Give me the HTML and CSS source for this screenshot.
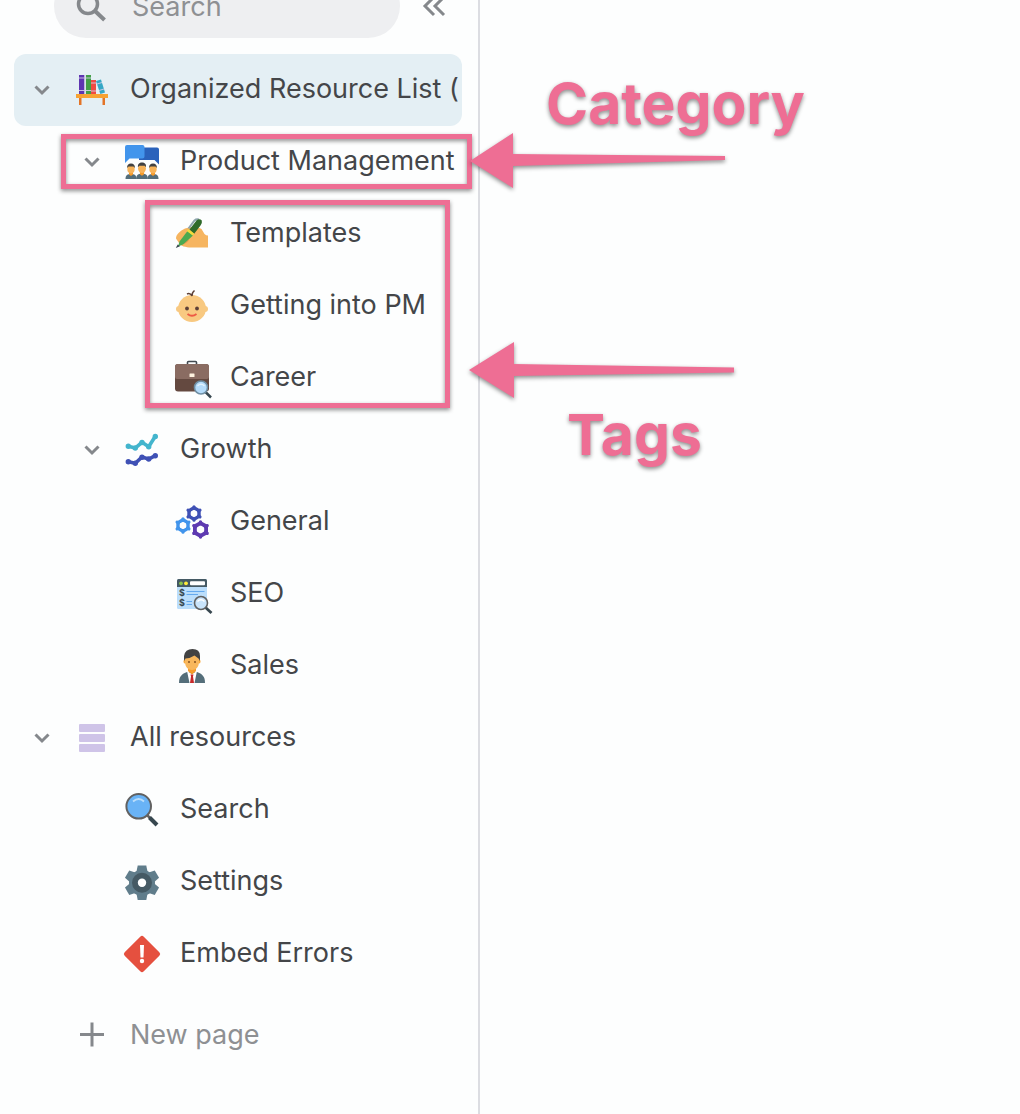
FILE: index.html
```
<!DOCTYPE html>
<html lang="en">
<head>
    <meta charset="utf-8">
    <title>Organized Resource List</title>
    <link rel="stylesheet" href="styles.css">
</head>
<body>
    <!-- shared shapes -->
    <svg class="defs" aria-hidden="true">
        <symbol id="chevron" viewBox="0 0 20 20">
            <path d="M3.500 6.500L10 13L16.500 6.500" fill="none" stroke="#85888c" stroke-width="3"/>
        </symbol>
        <symbol id="cog" viewBox="-10 -10 20 20">
            <path d="M0 -6.800L5.900 -3.400V3.400L0 6.800L-5.900 3.400V-3.400Z" fill="none" stroke="currentColor" stroke-width="4" stroke-linejoin="round"/>
            <path d="M0 -6V-8M0 6V8M5.200 -3L7 -4M-5.200 3L-7 4M5.200 3L7 4M-5.200 -3L-7 -4" stroke="currentColor" stroke-width="3.600" stroke-linecap="round"/>
        </symbol>
        <symbol id="person" viewBox="0 0 12 16">
            <path d="M0.500 16C0.500 12 2.500 11 6 11S11.500 12 11.500 16Z" fill="#546e7a"/>
            <path d="M4 9H8V11.500L6 13L4 11.500Z" fill="#f79c2a"/>
            <ellipse cx="6" cy="6" rx="3.700" ry="4.400" fill="#f7b359"/>
            <path d="M2.200 5C1.800 2 3.500 0.500 6 0.500S10.200 2 9.800 5L8.500 3.500H3.500Z" fill="#424242"/>
        </symbol>
    </svg>

    <aside class="sidebar">
        <div class="topbar">
            <label class="search">
                <svg class="icon" viewBox="0 0 36 36" aria-hidden="true">
                    <circle cx="14" cy="16" r="9.500" fill="none" stroke="#85888c" stroke-width="3.500"/>
                    <path d="M20.500 22.500L30.500 32" stroke="#85888c" stroke-width="4"/>
                </svg>
                <input type="text" placeholder="Search" aria-label="Search">
            </label>
            <button class="collapse" aria-label="Collapse sidebar">
                <svg width="24" height="24" viewBox="0 0 24 24">
                    <path d="M12 3L3 12L12 21M22 3L13 12L22 21" fill="none" stroke="#85888c" stroke-width="3"/>
                </svg>
            </button>
        </div>

        <nav>
            <ul class="tree">
                <li>
                    <div class="row active">
                        <button class="toggle" aria-label="Toggle Organized Resource List"><svg><use href="#chevron"/></svg></button>
                        <a href="#">
                            <svg class="icon" viewBox="0 0 36 36">
                                <path d="M5 3H10.500V22H5Z" fill="#5e35b1"/>
                                <path d="M12 3H17V22H12Z" fill="#43a047"/>
                                <path d="M17 8H22V22H17Z" fill="#ef4b43"/>
                                <path d="M22 9L27 7.500L31 20.500L26.300 22Z" fill="#35a8c6"/>
                                <path d="M5 6H10.500M5 18.500H10.500M12 6H17M12 18.500H17M17 11H22M17 19H22M23 12L28 10.500M25 18.500L30 17" stroke="#d5cdea" stroke-width="0.900"/>
                                <path d="M10.500 3H12V22H10.500Z" fill="#d9dfea"/>
                                <path d="M5 26H7.500V33H5ZM28.500 26H31V33H28.500Z" fill="#e37426"/>
                                <path d="M2 22H34V26H2Z" fill="#f7a233"/>
                            </svg>
                            <span class="label">Organized Resource List (</span>
                        </a>
                    </div>
                    <ul>
                        <li>
                            <div class="row">
                                <button class="toggle" aria-label="Toggle Product Management"><svg><use href="#chevron"/></svg></button>
                                <a href="#">
                                    <svg class="icon" viewBox="0 0 36 36">
                                        <path d="M15 3.500H33Q35 3.500 35 5.500V20.500L30.500 16H15Z" fill="#2a62bb"/>
                                        <path d="M3 1H18.500Q20.500 1 20.500 3V12.500Q20.500 14.500 18.500 14.500H5.500L1 19V3Q1 1 3 1Z" fill="#4295ec"/>
                                        <use href="#person" x="1" y="19" width="12" height="16"/>
                                        <use href="#person" x="23" y="19" width="12" height="16"/>
                                        <use href="#person" x="11.500" y="18" width="13" height="17"/>
                                    </svg>
                                    <span class="label">Product Management</span>
                                </a>
                            </div>
                            <ul>
                                <li><div class="row leaf"><a href="#">
                                    <svg class="icon" viewBox="0 0 36 36">
                                        <path d="M2 22.500C2 18.500 6 15 11 12.500C16 10.500 24 10 27.500 13L30.500 18Q32 19.500 34 19.500V31.500H17C12 31.500 6 30 5 27Z" fill="#f6b560"/>
                                        <path d="M8 26Q12 21 15 24Q12 28 9 28Z" fill="#e6974b"/>
                                        <path d="M14.500 12.500L20.500 4.500Q22 3 25 3.500" fill="none" stroke="#8fa5ad" stroke-width="2"/>
                                        <path d="M15.500 13.500L22.500 4.500Q25.500 2 27.800 4.500Q28.500 7 26.500 9.500L20 18Z" fill="#2f6a2a"/>
                                        <path d="M13.500 15L19 19.500L9 28.500L4 30.500L5.500 25.500Z" fill="#4caa50"/>
                                        <path d="M13.500 14L19.500 18.500" stroke="#f1dc3a" stroke-width="2.500"/>
                                        <path d="M1.800 32L3.700 28.500L6 30.200Z" fill="#37474f"/>
                                    </svg>
                                    <span class="label">Templates</span>
                                </a></div></li>
                                <li><div class="row leaf"><a href="#">
                                    <svg class="icon" viewBox="0 0 36 36">
                                        <circle cx="5" cy="21" r="3" fill="#f8c981"/>
                                        <circle cx="31" cy="21" r="3" fill="#f8c981"/>
                                        <ellipse cx="18" cy="20.500" rx="14" ry="13.500" fill="#f8c981"/>
                                        <path d="M13 6Q16 4.500 18 8Q17.500 5 20.500 2.500" fill="none" stroke="#5d4037" stroke-width="1.500"/>
                                        <circle cx="13" cy="20.500" r="1.900" fill="#5d4037"/>
                                        <circle cx="23" cy="20.500" r="1.900" fill="#5d4037"/>
                                        <path d="M13.500 26Q18 29.500 22.500 26" fill="none" stroke="#ee5a45" stroke-width="1.800"/>
                                    </svg>
                                    <span class="label">Getting into PM</span>
                                </a></div></li>
                                <li><div class="row leaf"><a href="#">
                                    <svg class="icon" viewBox="0 0 36 36">
                                        <path d="M13.500 5V2.500Q13.500 1.500 14.500 1.500H21.500Q22.500 1.500 22.500 2.500V5" fill="none" stroke="#424a50" stroke-width="1.600"/>
                                        <rect x="1" y="4" width="34" height="27.500" rx="3" fill="#644940"/>
                                        <path d="M4 4H32Q35 4 35 7V17Q35 19 33 19H3Q1 19 1 17V7Q1 4 4 4Z" fill="#8a6c62"/>
                                        <rect x="15.500" y="13.500" width="5" height="3.500" rx="0.500" fill="#fff3e0"/>
                                        <path d="M31.500 32L37 37.500" stroke="#37474f" stroke-width="2.500"/>
                                        <circle cx="27" cy="27.500" r="6.500" fill="#b5dcfb" stroke="#6f8ea3" stroke-width="1.600"/>
                                        <path d="M23.500 26Q27 22.500 30.500 26" fill="none" stroke="#e3f2fd" stroke-width="1.500"/>
                                    </svg>
                                    <span class="label">Career</span>
                                </a></div></li>
                            </ul>
                        </li>
                        <li>
                            <div class="row">
                                <button class="toggle" aria-label="Toggle Growth"><svg><use href="#chevron"/></svg></button>
                                <a href="#">
                                    <svg class="icon" viewBox="0 0 36 36">
                                        <g fill="none" stroke-width="3.600">
                                            <path d="M4.300 14.300L11.300 16L18 10.300L24.700 14.700L31.300 4.300" stroke="#43b5cd"/>
                                            <path d="M4.300 29.700L11.300 31.300L18 25L24.700 27L31.300 23.700" stroke="#3f51b5"/>
                                        </g>
                                        <g fill="none" stroke-width="5.400" stroke-linecap="round">
                                            <path d="M4.300 14.300h0M11.300 16h0M18 10.500h0M24.700 14.700h0M31.300 4.500h0" stroke="#43b5cd"/>
                                            <path d="M4.300 29.700h0M11.300 31.300h0M18 25.300h0M24.700 27h0M31.300 23.700h0" stroke="#3f51b5"/>
                                        </g>
                                    </svg>
                                    <span class="label">Growth</span>
                                </a>
                            </div>
                            <ul>
                                <li><div class="row leaf"><a href="#">
                                    <svg class="icon" viewBox="0 0 36 36">
                                        <use href="#cog" x="11.500" y="1" width="17" height="17" color="#3f51b5"/>
                                        <use href="#cog" x="0.500" y="13" width="17" height="17" color="#4295ec"/>
                                        <use href="#cog" x="17" y="16" width="19" height="19" color="#5e3ab1"/>
                                    </svg>
                                    <span class="label">General</span>
                                </a></div></li>
                                <li><div class="row leaf"><a href="#">
                                    <svg class="icon" viewBox="0 0 36 36">
                                        <rect x="3" y="3" width="30" height="30" rx="1.500" fill="#bbdefb"/>
                                        <path d="M4.500 3H31.500Q33 3 33 4.500V11H3V4.500Q3 3 4.500 3Z" fill="#455a64"/>
                                        <circle cx="7" cy="7.300" r="1.900" fill="#8bc34a"/>
                                        <circle cx="12" cy="7.300" r="1.900" fill="#ffeb3b"/>
                                        <rect x="16" y="5.300" width="15" height="4" rx="1" fill="#fff"/>
                                        <text x="5" y="20" class="coin">$</text>
                                        <text x="5" y="30" class="coin">$</text>
                                        <path d="M12.500 15.500H30.500M12.500 18.500H24M12.500 25.500H18M12.500 28.500H18" stroke="#64a9ee" stroke-width="1.200"/>
                                        <path d="M31.500 31.500L37.500 37" stroke="#37474f" stroke-width="2.800"/>
                                        <circle cx="27" cy="27" r="6.500" fill="#c9e4fb" stroke="#616161" stroke-width="1.600"/>
                                        <path d="M23.500 25.500Q27 22 30.500 25.500" fill="none" stroke="#fff" stroke-width="1.500"/>
                                    </svg>
                                    <span class="label">SEO</span>
                                </a></div></li>
                                <li><div class="row leaf"><a href="#">
                                    <svg class="icon" viewBox="0 0 36 36">
                                        <path d="M5 35C5 28 8 26 13 24H23C28 26 31 28 31 35Z" fill="#546e7a"/>
                                        <path d="M13 23L18 26L23 23L20.500 35H15.500Z" fill="#fff"/>
                                        <path d="M14 19H22V23L18 26.500L14 23Z" fill="#f79c2a"/>
                                        <path d="M16.500 26.500H19.500L19 28.500L20 35H16L17 28.500Z" fill="#c62828"/>
                                        <ellipse cx="10.800" cy="13.500" rx="1.300" ry="2" fill="#f9a93a"/>
                                        <ellipse cx="25.200" cy="13.500" rx="1.300" ry="2" fill="#f9a93a"/>
                                        <path d="M11 7H25V15Q24 22 18 22T11 15Z" fill="#f8b75c"/>
                                        <path d="M10 13V8Q11 1 18.500 1Q26 1 26 8V13L24.500 10.500L20.500 7.500Q17 10 11.500 10.500Z" fill="#424242"/>
                                        <circle cx="15" cy="14" r="0.900" fill="#784719"/>
                                        <circle cx="21" cy="14" r="0.900" fill="#784719"/>
                                    </svg>
                                    <span class="label">Sales</span>
                                </a></div></li>
                            </ul>
                        </li>
                    </ul>
                </li>
                <li>
                    <div class="row">
                        <button class="toggle" aria-label="Toggle All resources"><svg><use href="#chevron"/></svg></button>
                        <a href="#">
                            <svg class="icon" viewBox="0 0 36 36" fill="#cfc4e8">
                                <rect x="5" y="4" width="26" height="8" rx="1"/>
                                <rect x="5" y="14" width="26" height="8" rx="1"/>
                                <rect x="5" y="24" width="26" height="8" rx="1"/>
                            </svg>
                            <span class="label">All resources</span>
                        </a>
                    </div>
                    <ul>
                        <li><div class="row leaf"><a href="#">
                            <svg class="icon" viewBox="0 0 36 36">
                                <path d="M22.500 22.500L27 27" stroke="#616161" stroke-width="2.500"/>
                                <path d="M25.500 25.500L33 33" stroke="#37474f" stroke-width="4"/>
                                <circle cx="14.700" cy="14.300" r="12.300" fill="#69b3f6" stroke="#616161" stroke-width="2"/>
                                <path d="M9 9.500Q14.700 4.500 20 9.500" fill="none" stroke="#bbdefb" stroke-width="1.800"/>
                            </svg>
                            <span class="label">Search</span>
                        </a></div></li>
                        <li><div class="row leaf"><a href="#">
                            <svg class="icon" viewBox="0 0 36 36">
                                <g transform="translate(18 18.700)">
                                    <g fill="#607d8b">
                                        <circle r="13"/>
                                        <path id="tooth" d="M-5.500 -11L-4.300 -17.200H4.300L5.500 -11V11L4.300 17.200H-4.300L-5.500 11Z"/>
                                        <use href="#tooth" transform="rotate(60)"/>
                                        <use href="#tooth" transform="rotate(120)"/>
                                    </g>
                                    <circle r="7" fill="none" stroke="#455a64" stroke-width="6"/>
                                    <circle r="4.200" fill="#fdfefe"/>
                                </g>
                            </svg>
                            <span class="label">Settings</span>
                        </a></div></li>
                        <li><div class="row leaf"><a href="#">
                            <svg class="icon" viewBox="0 0 36 36">
                                <rect x="4.500" y="4.500" width="27" height="27" rx="2.500" transform="rotate(45 18 18)" fill="#e5503f"/>
                                <path d="M16 9H20L19.500 21.500H16.500Z" fill="#fff"/>
                                <circle cx="18" cy="25" r="2.200" fill="#fff"/>
                            </svg>
                            <span class="label">Embed Errors</span>
                        </a></div></li>
                    </ul>
                </li>
            </ul>
            <button class="new-page">
                <svg class="icon" viewBox="0 0 36 36">
                    <path d="M6 16.500H30M18 4.500V28.500" stroke="#85888c" stroke-width="3"/>
                </svg>
                <span class="label">New page</span>
            </button>
        </nav>
    </aside>

    <!-- callouts drawn over the sidebar -->
    <div class="callouts">
        <div class="frame frame-category"></div>
        <div class="frame frame-tags"></div>
        <svg class="arrow arrow-category" width="256" height="56" viewBox="0 0 256 56">
            <path d="M1 28L44 0V21L256 23V27L44 33V55Z" fill="#ee6e94"/>
        </svg>
        <svg class="arrow arrow-tags" width="265" height="56" viewBox="0 0 265 56">
            <path d="M0 28L45 0V22L265 25.500V30.500L45 34V56Z" fill="#ee6e94"/>
        </svg>
        <strong class="note note-category">Category</strong>
        <strong class="note note-tags">Tags</strong>
    </div>
</body>
</html>
```

FILE: styles.css
```
* {
    box-sizing: border-box;
}
body {
    margin: 0;
    background: #fdfefe;
    color: #444649;
    font-family: Inter, "Liberation Sans", sans-serif;
    font-size: 27px;
    overflow-x: hidden;
}
.defs {
    position: absolute;
    width: 0;
    height: 0;
}
button {
    padding: 0;
    border: 0;
    background: none;
    color: inherit;
    font: inherit;
    cursor: pointer;
}

/* sidebar */
.sidebar {
    display: flow-root;
    width: 480px;
    min-height: 100vh;
    padding: 0 16px 0 14px;
    border-right: 2px solid #dcdde2;
}
/* the top bar is scrolled partly out of view */
.topbar {
    display: flex;
    align-items: center;
    gap: 22px;
    margin-top: -26px;
    padding: 0 0 16px 40px;
}
.search {
    display: flex;
    align-items: center;
    flex: 0 0 346px;
    gap: 22px;
    min-width: 0;
    height: 64px;
    padding: 0 20px;
    border-radius: 32px;
    background: #eeeff1;
}
.search input {
    flex: 1;
    min-width: 0;
    padding: 0;
    border: 0;
    outline: 0;
    background: none;
    color: inherit;
    font: inherit;
}
.search input::placeholder {
    color: #8e9093;
    opacity: 1;
}
.collapse {
    display: flex;
}

.tree,
.tree ul {
    margin: 0;
    padding: 0;
    list-style: none;
}
.tree ul {
    padding-left: 50px;
}
.row {
    display: flex;
    align-items: center;
    height: 72px;
    padding: 0 4px 0 8px;
    border-radius: 12px;
}
.row.active {
    background: #e4eff4;
}
.row.leaf {
    padding-left: 60px;
}
.toggle {
    display: flex;
    align-items: center;
    justify-content: center;
    flex: 0 0 40px;
    height: 40px;
    margin-right: 12px;
}
.toggle svg {
    width: 20px;
    height: 20px;
}
.row a {
    display: flex;
    align-items: center;
    flex: 1;
    gap: 20px;
    min-width: 0;
    color: inherit;
    text-decoration: none;
}
.icon {
    flex: none;
    width: 36px;
    height: 36px;
    overflow: visible;
}
.label {
    padding-bottom: 2px;
    line-height: 40px;
    white-space: nowrap;
    overflow: hidden;
}
.coin {
    fill: #37474f;
    font-size: 9px;
    font-weight: 700;
}
.new-page {
    display: flex;
    align-items: center;
    gap: 20px;
    height: 72px;
    margin-top: 10px;
    padding-left: 60px;
    color: #8e9093;
}

/* callouts */
.callouts {
    pointer-events: none;
}
.frame,
.arrow,
.note {
    position: absolute;
    filter: drop-shadow(0 2px 2px rgba(0, 0, 0, 0.45));
}
.frame {
    border: 5px solid #ee6e94;
}
.frame-category {
    top: 134px;
    left: 61px;
    width: 411px;
    height: 55px;
}
.frame-tags {
    top: 200px;
    left: 145px;
    width: 305px;
    height: 208px;
}
.arrow-category {
    top: 133px;
    left: 469px;
}
.arrow-tags {
    top: 342px;
    left: 469px;
}
.note {
    color: #ee6e94;
    font-size: 57px;
    font-weight: 700;
    line-height: 68px;
}
.note-category {
    top: 70px;
    left: 546px;
}
.note-tags {
    top: 401px;
    left: 567px;
}
```
